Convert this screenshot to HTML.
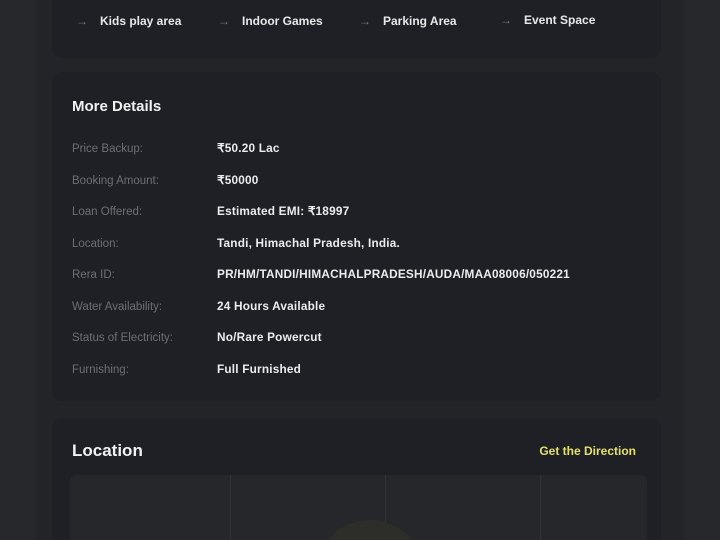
<!DOCTYPE html><html style="overflow:hidden;height:540px"><head><style>
body{margin:0;width:720px;height:540px;background:#27282c;font-family:"Liberation Sans",sans-serif;overflow:hidden;position:relative}
.strip{position:absolute;left:36px;top:0;width:648px;height:540px;background:#232428}
.card{position:absolute;left:52px;width:609px;background:#1e2025;border-radius:10px;overflow:hidden}
.am{position:absolute;font-size:12px;color:#e8e8e8;font-weight:bold;line-height:14px}
.am span{color:#777;font-weight:normal;margin-right:12px}
h2{position:absolute;margin:0;color:#f2f2f2;font-size:15px;font-weight:bold}
.row{position:absolute;left:20px;font-size:11.5px;line-height:14px;height:14px;width:580px}
.row .k{color:#6d6f74;position:absolute;left:0;top:1px;white-space:nowrap}
.row .v{color:#ececec;position:absolute;left:145px;top:0;white-space:nowrap;font-weight:bold;font-size:11.8px;letter-spacing:0.2px}
</style></head><body>
<div class="strip"></div>
<div class="card" style="top:-10px;height:68px">
<div class="am" style="left:24px;top:24px"><span>→</span>Kids play area</div>
<div class="am" style="left:166px;top:24px"><span>→</span>Indoor Games</div>
<div class="am" style="left:307px;top:24px"><span>→</span>Parking Area</div>
<div class="am" style="left:448px;top:23px"><span>→</span>Event Space</div>
</div>
<div class="card" style="top:72px;height:329px">
<h2 style="left:20px;top:26px">More Details</h2>
<div class="row" style="top:69px"><span class="k">Price Backup:</span><span class="v">₹50.20 Lac</span></div>
<div class="row" style="top:101px"><span class="k">Booking Amount:</span><span class="v">₹50000</span></div>
<div class="row" style="top:132px"><span class="k">Loan Offered:</span><span class="v">Estimated EMI: ₹18997</span></div>
<div class="row" style="top:164px"><span class="k">Location:</span><span class="v">Tandi, Himachal Pradesh, India.</span></div>
<div class="row" style="top:195px"><span class="k">Rera ID:</span><span class="v">PR/HM/TANDI/HIMACHALPRADESH/AUDA/MAA08006/050221</span></div>
<div class="row" style="top:227px"><span class="k">Water Availability:</span><span class="v">24 Hours Available</span></div>
<div class="row" style="top:258px"><span class="k">Status of Electricity:</span><span class="v">No/Rare Powercut</span></div>
<div class="row" style="top:290px"><span class="k">Furnishing:</span><span class="v">Full Furnished</span></div>
</div>
<div class="card" style="top:418px;height:122px;border-radius:10px 10px 0 0">
<h2 style="left:20px;top:23px;font-size:17px">Location</h2>
<div style="position:absolute;right:25px;top:26px;color:#e4e06a;font-size:12px;font-weight:bold">Get the Direction</div>
<div style="position:absolute;left:18px;top:57px;width:577px;height:65px;background:#25272b;border-radius:6px 6px 0 0;overflow:hidden">
<div style="position:absolute;left:160px;top:0;width:1px;height:65px;background:#303236"></div>
<div style="position:absolute;left:315px;top:0;width:1px;height:65px;background:#303236"></div>
<div style="position:absolute;left:470px;top:0;width:1px;height:65px;background:#303236"></div>
<div style="position:absolute;left:245px;top:45px;width:110px;height:110px;border-radius:50%;background:#2d2e29"></div>
</div>
</div>
</body></html>
